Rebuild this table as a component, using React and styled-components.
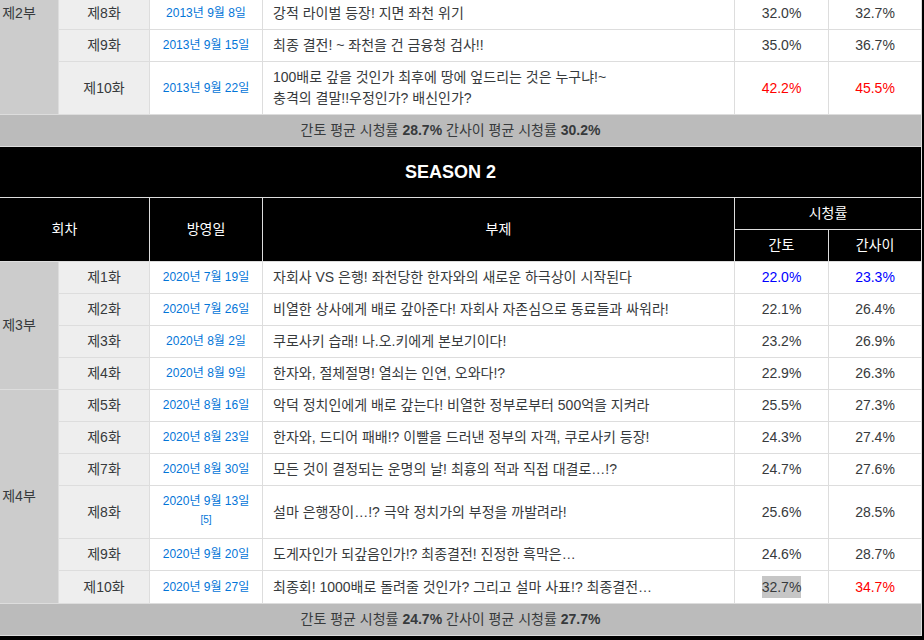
import React from "react";
import styled, { createGlobalStyle } from "styled-components";

const GlobalStyle = createGlobalStyle`
  html, body {
    margin: 0;
    padding: 0;
    background: #000;
    overflow: hidden;
  }
  body {
    font-family: "Liberation Sans", "Noto Sans CJK KR", sans-serif;
  }
`;

const Table = styled.table`
  border-collapse: collapse;
  table-layout: fixed;
  width: 942px;
  margin: -3px 0 0 -21px;
  background: #fff;
  color: #373a3c;
  font-size: 14px;
  line-height: 21px;
`;

const Col = styled.col`
  width: ${(p) => p.$w}px;
`;

const Cell = styled.td`
  border: 1px solid #ddd;
  padding: 5px 10px;
  text-align: center;
  vertical-align: middle;
  white-space: nowrap;
`;

const PartCell = styled(Cell)`
  background: #ccc;
  vertical-align: ${(p) => (p.$top ? "top" : "middle")};
`;

const EpCell = styled(Cell)`
  background: #eee;
`;

const DateCell = styled(Cell)`
  font-size: 12px;
  color: #0275d8;
`;

const Foot = styled.span`
  display: block;
  font-size: 10px;
  line-height: 15px;
  margin-bottom: 6px;
`;

const TitleCell = styled(Cell)`
  text-align: left;
`;

const RateCell = styled(Cell)`
  color: ${(p) => (p.$tone === "red" ? "#ff0000" : p.$tone === "blue" ? "#0000ff" : "#373a3c")};
`;

const Mark = styled.span`
  display: inline-block;
  background: #c6c6c6;
  line-height: 22px;
`;

const SummaryCell = styled(Cell)`
  background: #bbb;
  color: #373a3c;
`;

const HeadCell = styled.th`
  border: 1px solid #ddd;
  background: #000;
  color: #fff;
  font-weight: normal;
  padding: 5px 10px;
  text-align: center;
  vertical-align: middle;
`;

const SeasonCell = styled(HeadCell)`
  font-size: 18px;
  font-weight: bold;
  line-height: 24px;
  padding: 13px 10px;
`;

const season1 = [
  { ep: "제8화", date: "2013년 9월 8일", title: ["강적 라이벌 등장! 지면 좌천 위기"], kt: "32.0%", ks: "32.7%" },
  { ep: "제9화", date: "2013년 9월 15일", title: ["최종 결전! ~ 좌천을 건 금융청 검사!!"], kt: "35.0%", ks: "36.7%" },
  {
    ep: "제10화",
    date: "2013년 9월 22일",
    title: ["100배로 갚을 것인가 최후에 땅에 엎드리는 것은 누구냐!~", "충격의 결말!!우정인가? 배신인가?"],
    kt: "42.2%",
    ks: "45.5%",
    ktTone: "red",
    ksTone: "red",
  },
];

const season2 = [
  { part: "제3부", span: 4, ep: "제1화", date: "2020년 7월 19일", title: ["자회사 VS 은행! 좌천당한 한자와의 새로운 하극상이 시작된다"], kt: "22.0%", ks: "23.3%", ktTone: "blue", ksTone: "blue" },
  { ep: "제2화", date: "2020년 7월 26일", title: ["비열한 상사에게 배로 갚아준다! 자회사 자존심으로 동료들과 싸워라!"], kt: "22.1%", ks: "26.4%" },
  { ep: "제3화", date: "2020년 8월 2일", title: ["쿠로사키 습래! 나.오.키에게 본보기이다!"], kt: "23.2%", ks: "26.9%" },
  { ep: "제4화", date: "2020년 8월 9일", title: ["한자와, 절체절명! 열쇠는 인연, 오와다!?"], kt: "22.9%", ks: "26.3%" },
  { part: "제4부", span: 6, ep: "제5화", date: "2020년 8월 16일", title: ["악덕 정치인에게 배로 갚는다! 비열한 정부로부터 500억을 지켜라"], kt: "25.5%", ks: "27.3%" },
  { ep: "제6화", date: "2020년 8월 23일", title: ["한자와, 드디어 패배!? 이빨을 드러낸 정부의 자객, 쿠로사키 등장!"], kt: "24.3%", ks: "27.4%" },
  { ep: "제7화", date: "2020년 8월 30일", title: ["모든 것이 결정되는 운명의 날! 최흉의 적과 직접 대결로…!?"], kt: "24.7%", ks: "27.6%" },
  { ep: "제8화", date: "2020년 9월 13일", foot: "[5]", title: ["설마 은행장이…!? 극악 정치가의 부정을 까발려라!"], kt: "25.6%", ks: "28.5%" },
  { ep: "제9화", date: "2020년 9월 20일", title: ["도게자인가 되갚음인가!? 최종결전! 진정한 흑막은…"], kt: "24.6%", ks: "28.7%" },
  { ep: "제10화", date: "2020년 9월 27일", title: ["최종회! 1000배로 돌려줄 것인가? 그리고 설마 사표!? 최종결전…"], kt: "32.7%", ks: "34.7%", ktMark: true, ksTone: "red" },
];

function Title({ lines }) {
  return lines.map((l, i) => (
    <React.Fragment key={i}>
      {i > 0 && <br />}
      {l}
    </React.Fragment>
  ));
}

function EpisodeRow({ row, partCell }) {
  return (
    <tr>
      {partCell}
      <EpCell>{row.ep}</EpCell>
      <DateCell>
        {row.date}
        {row.foot && <Foot>{row.foot}</Foot>}
      </DateCell>
      <TitleCell>
        <Title lines={row.title} />
      </TitleCell>
      <RateCell $tone={row.ktTone}>{row.ktMark ? <Mark>{row.kt}</Mark> : row.kt}</RateCell>
      <RateCell $tone={row.ksTone}>{row.ks}</RateCell>
    </tr>
  );
}

function Summary({ kanto, kansai }) {
  return (
    <tr>
      <SummaryCell colSpan={6}>
        간토 평균 시청률 <b>{kanto}</b> 간사이 평균 시청률 <b>{kansai}</b>
      </SummaryCell>
    </tr>
  );
}

export default function App() {
  return (
    <>
      <GlobalStyle />
      <Table>
        <colgroup>
          <Col $w={79} />
          <Col $w={91} />
          <Col $w={113} />
          <Col $w={472} />
          <Col $w={94} />
          <Col $w={93} />
        </colgroup>
        <tbody>
          {season1.map((row, i) => (
            <EpisodeRow
              key={row.ep}
              row={row}
              partCell={i === 0 ? <PartCell rowSpan={3} $top>제2부</PartCell> : null}
            />
          ))}
          <Summary kanto="28.7%" kansai="30.2%" />
          <tr>
            <SeasonCell colSpan={6}>SEASON 2</SeasonCell>
          </tr>
          <tr>
            <HeadCell colSpan={2} rowSpan={2}>회차</HeadCell>
            <HeadCell rowSpan={2}>방영일</HeadCell>
            <HeadCell rowSpan={2}>부제</HeadCell>
            <HeadCell colSpan={2}>시청률</HeadCell>
          </tr>
          <tr>
            <HeadCell>간토</HeadCell>
            <HeadCell>간사이</HeadCell>
          </tr>
          {season2.map((row) => (
            <EpisodeRow
              key={row.date}
              row={row}
              partCell={row.part ? <PartCell rowSpan={row.span}>{row.part}</PartCell> : null}
            />
          ))}
          <Summary kanto="24.7%" kansai="27.7%" />
        </tbody>
      </Table>
    </>
  );
}
